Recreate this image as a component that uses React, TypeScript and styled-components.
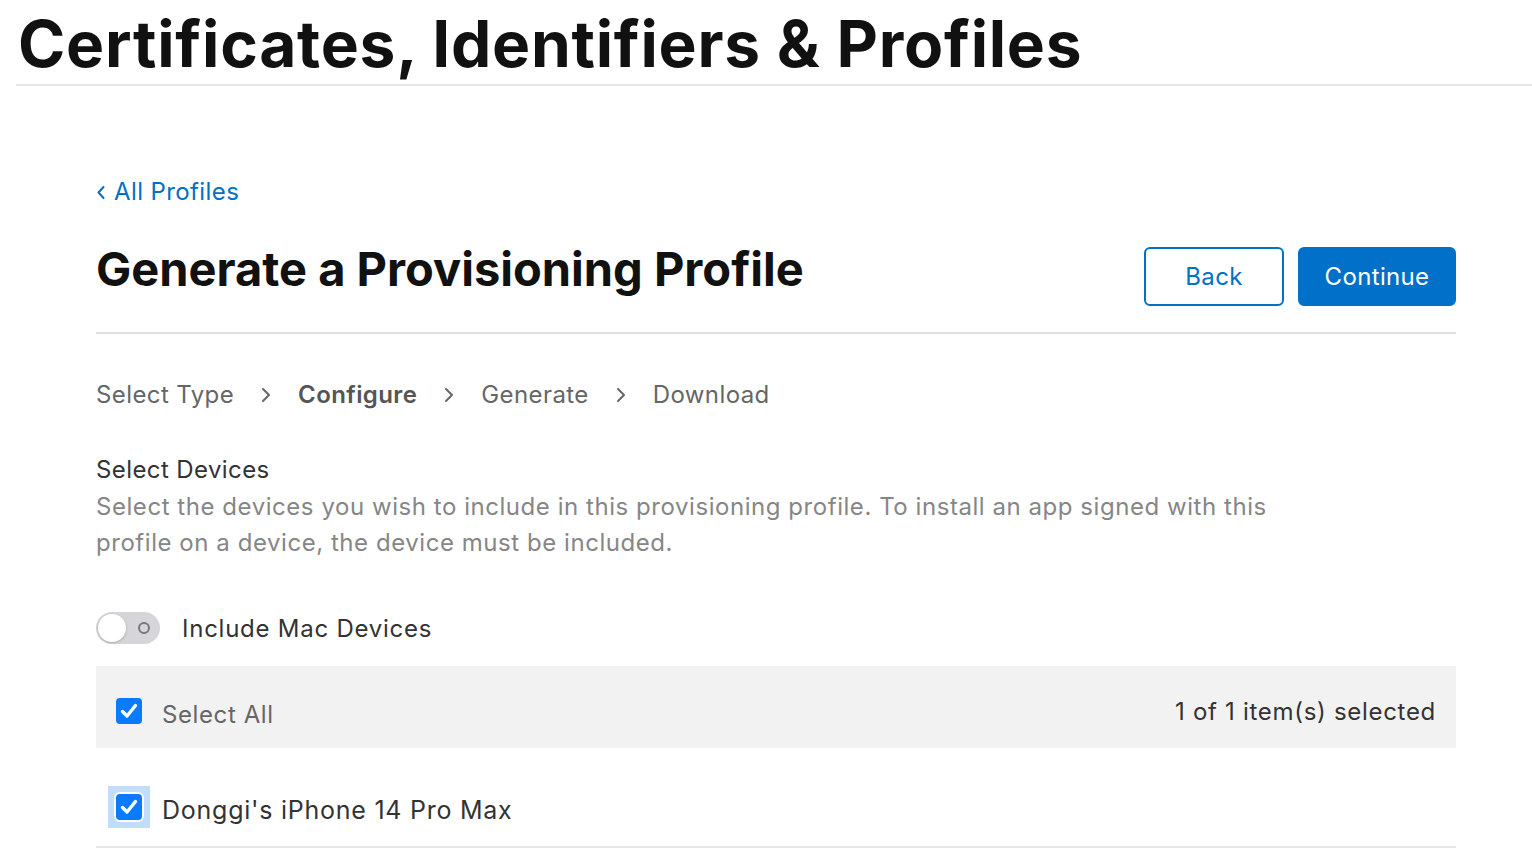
import React, { useState } from "react";
import styled, { createGlobalStyle } from "styled-components";

const GlobalStyle = createGlobalStyle`
  * { box-sizing: border-box; }
  body {
    margin: 0;
    background: #fff;
    font-family: Inter, "Noto Sans", "Liberation Sans", sans-serif;
    color: #1d1d1f;
    letter-spacing: 0.4px;
    -webkit-font-smoothing: antialiased;
  }
`;

const Page = styled.div`
  width: 1532px;
  overflow: hidden;
`;

const TopBar = styled.header`
  margin-left: 16px;
  height: 86px;
  border-bottom: 2px solid #e6e6e6;
  display: flex;
  align-items: center;
`;

const SiteTitle = styled.h1`
  margin: 0 0 0 2px;
  font-size: 64px;
  font-weight: 700;
  letter-spacing: 0.75px;
  color: #111;
  line-height: 1;
  padding-top: 4px;
`;

const Main = styled.main`
  width: 1360px;
  margin: 0 0 0 96px;
  padding-top: 91px;
`;

const BackLink = styled.a`
  display: inline-flex;
  align-items: center;
  gap: 8px;
  color: #0070c9;
  font-size: 24px;
  text-decoration: none;
  cursor: pointer;
`;

const TitleRow = styled.div`
  display: flex;
  justify-content: space-between;
  align-items: flex-start;
  margin-top: 28px;
  padding-bottom: 26px;
  border-bottom: 2px solid #e0e0e0;
`;

const PageTitle = styled.h2`
  margin: 0;
  font-size: 47px;
  font-weight: 700;
  letter-spacing: 0px;
  color: #111;
  line-height: 70px;
`;

const Actions = styled.div`
  display: flex;
  gap: 14px;
  margin-top: 13px;
`;

const Button = styled.button<{ $primary?: boolean }>`
  height: 59px;
  min-width: ${({ $primary }) => ($primary ? "158px" : "140px")};
  padding: 0 24px;
  border-radius: 6px;
  font-family: inherit;
  font-size: 24px;
  letter-spacing: 0.35px;
  cursor: pointer;
  border: 2px solid #0070c9;
  background: ${({ $primary }) => ($primary ? "#0070c9" : "#fff")};
  color: ${({ $primary }) => ($primary ? "#fff" : "#0070c9")};
`;

const Steps = styled.ol`
  list-style: none;
  margin: 0;
  padding: 44px 0 0;
  display: flex;
  align-items: center;
  gap: 26px;
  font-size: 24px;
  line-height: 34px;
`;

const Step = styled.li<{ $current?: boolean }>`
  color: ${({ $current }) => ($current ? "#555" : "#666")};
  font-weight: ${({ $current }) => ($current ? 600 : 400)};
`;

const Chevron = styled.li`
  display: flex;
  align-items: center;
  color: #666;
`;

const Section = styled.section`
  margin-top: 41px;
`;

const SectionTitle = styled.h3`
  margin: 0;
  font-size: 24px;
  font-weight: 400;
  color: #333;
  line-height: 34px;
`;

const Description = styled.p`
  margin: 2px 0 0;
  max-width: 1200px;
  font-size: 24px;
  line-height: 36px;
  letter-spacing: 0.55px;
  color: #868686;
`;

const ToggleRow = styled.label`
  display: flex;
  align-items: center;
  gap: 22px;
  margin-top: 51px;
  font-size: 24px;
  letter-spacing: 0.75px;
  color: #333;
  cursor: pointer;
`;

const Track = styled.span<{ $on: boolean }>`
  position: relative;
  width: 64px;
  height: 32px;
  border-radius: 16px;
  background: ${({ $on }) => ($on ? "#34c759" : "#d5d5da")};
  flex-shrink: 0;
`;

const Knob = styled.span<{ $on: boolean }>`
  position: absolute;
  top: 2px;
  left: ${({ $on }) => ($on ? "34px" : "2px")};
  width: 28px;
  height: 28px;
  border-radius: 50%;
  background: #fff;
  box-shadow: 0 1px 3px rgba(0, 0, 0, 0.2);
`;

const OffMark = styled.span`
  position: absolute;
  right: 10px;
  top: 10px;
  width: 12px;
  height: 12px;
  border-radius: 50%;
  border: 2px solid #777;
`;

const Table = styled.div`
  margin-top: 22px;
`;

const HeaderRow = styled.div`
  height: 82px;
  background: #f2f2f2;
  display: flex;
  align-items: center;
  justify-content: space-between;
  padding: 8px 20px 0 20px;
`;

const DeviceRow = styled.div`
  height: 100px;
  display: flex;
  align-items: center;
  padding: 20px 0 0 12px;
  border-bottom: 2px solid #e6e6e6;
`;

const CheckLabel = styled.label<{ $muted?: boolean; $tight?: boolean }>`
  display: flex;
  align-items: center;
  gap: ${({ $tight }) => ($tight ? "12px" : "20px")};
  font-size: ${({ $tight }) => ($tight ? "25px" : "24px")};
  letter-spacing: ${({ $tight }) => ($tight ? "0.75px" : "0.6px")};
  color: ${({ $muted }) => ($muted ? "#666" : "#333")};
  cursor: pointer;
`;

const LabelText = styled.span`
  padding-top: 6px;
`;

const Focus = styled.span<{ $focused?: boolean }>`
  display: flex;
  align-items: center;
  justify-content: center;
  width: ${({ $focused }) => ($focused ? "42px" : "26px")};
  height: ${({ $focused }) => ($focused ? "42px" : "26px")};
  background: ${({ $focused }) => ($focused ? "#c2ddfa" : "transparent")};
`;

const Box = styled.span<{ $focused?: boolean }>`
  width: 26px;
  height: 26px;
  border-radius: 4px;
  background: #0a7aff;
  display: flex;
  align-items: center;
  justify-content: center;
  box-shadow: ${({ $focused }) => ($focused ? "0 0 0 2px #fff" : "none")};
`;

const Count = styled.span`
  font-size: 24px;
  letter-spacing: 0.7px;
  color: #333;
`;

const Check = ({ focused }: { focused?: boolean }) => (
  <Focus $focused={focused}>
    <Box $focused={focused}>
      <svg width="18" height="16" viewBox="0 0 18 16">
        <path d="M2.5 8.5 L7 13 L15.5 2.5" fill="none" stroke="#fff" strokeWidth="3.4" strokeLinecap="round" strokeLinejoin="round" />
      </svg>
    </Box>
  </Focus>
);

const ChevronIcon = () => (
  <svg width="12" height="20" viewBox="0 0 12 20">
    <path d="M3 4 L9 10 L3 16" fill="none" stroke="currentColor" strokeWidth="2" strokeLinecap="round" strokeLinejoin="round" />
  </svg>
);

const steps = ["Select Type", "Configure", "Generate", "Download"];

export default function App() {
  const [mac, setMac] = useState(false);

  return (
    <Page>
      <GlobalStyle />
      <TopBar>
        <SiteTitle>Certificates, Identifiers &amp; Profiles</SiteTitle>
      </TopBar>
      <Main>
        <BackLink>
          <svg width="10" height="18" viewBox="0 0 10 18">
            <path d="M7.5 4 L2.5 9.5 L7.5 15" fill="none" stroke="currentColor" strokeWidth="2" strokeLinecap="round" strokeLinejoin="round" />
          </svg>
          All Profiles
        </BackLink>
        <TitleRow>
          <PageTitle>Generate a Provisioning Profile</PageTitle>
          <Actions>
            <Button>Back</Button>
            <Button $primary>Continue</Button>
          </Actions>
        </TitleRow>
        <Steps>
          {steps.map((s, i) => (
            <React.Fragment key={s}>
              {i > 0 && (
                <Chevron>
                  <ChevronIcon />
                </Chevron>
              )}
              <Step $current={s === "Configure"}>{s}</Step>
            </React.Fragment>
          ))}
        </Steps>
        <Section>
          <SectionTitle>Select Devices</SectionTitle>
          <Description>
            Select the devices you wish to include in this provisioning profile. To install an app signed with this
            profile on a device, the device must be included.
          </Description>
        </Section>
        <ToggleRow onClick={() => setMac((v) => !v)}>
          <Track $on={mac}>
            {!mac && <OffMark />}
            <Knob $on={mac} />
          </Track>
          Include Mac Devices
        </ToggleRow>
        <Table>
          <HeaderRow>
            <CheckLabel $muted>
              <Check />
              <LabelText>Select All</LabelText>
            </CheckLabel>
            <Count>1 of 1 item(s) selected</Count>
          </HeaderRow>
          <DeviceRow>
            <CheckLabel $tight>
              <Check focused />
              <LabelText>Donggi's iPhone 14 Pro Max</LabelText>
            </CheckLabel>
          </DeviceRow>
        </Table>
      </Main>
    </Page>
  );
}
